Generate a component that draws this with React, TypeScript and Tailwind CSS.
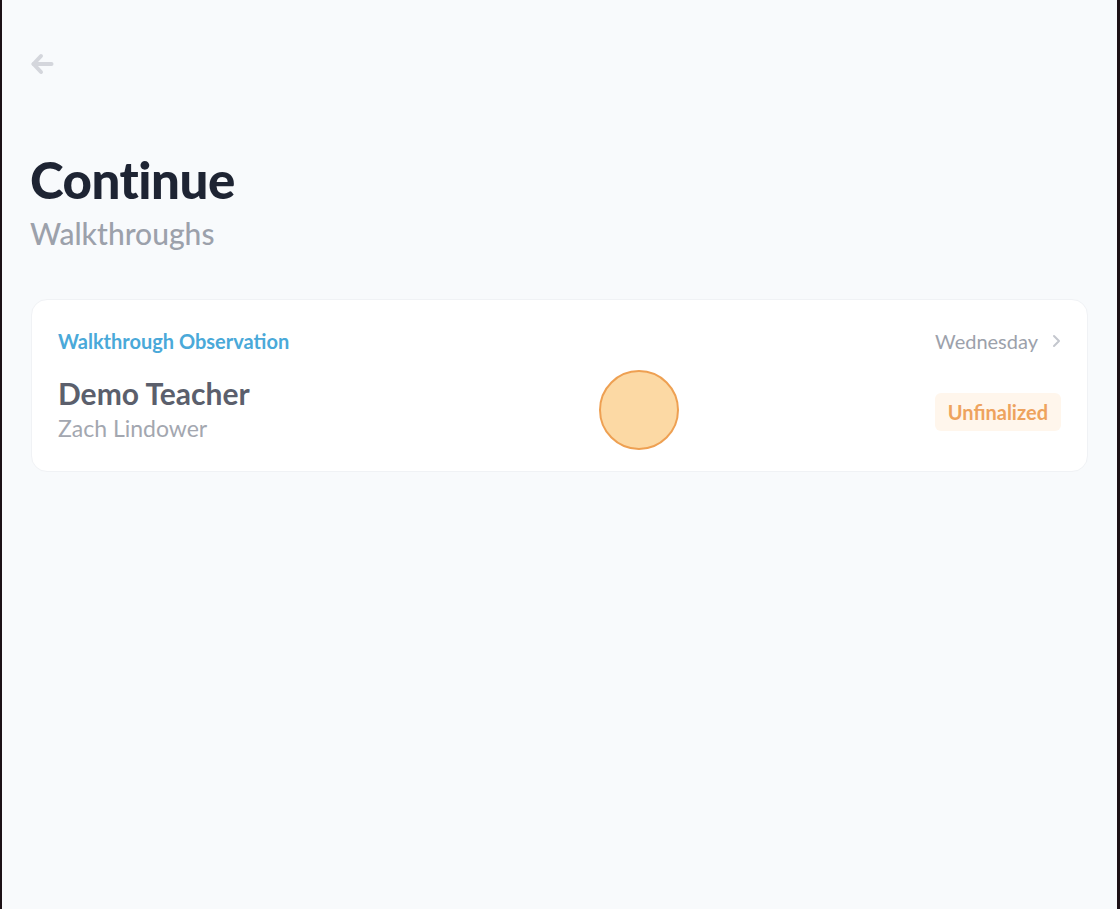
export default function App() {
  return (
    <div className="min-h-[909px] h-[909px] w-[1120px] bg-[#1c1116] flex" style={{ fontFamily: "Lato, 'Noto Sans', sans-serif" }}>
      <div className="relative ml-[2px] mr-[3px] flex-1 bg-[#f8fafc] px-[28px] pt-[52px]">
        {/* back arrow */}
        <button className="block text-[#d4d6dc]">
          <svg width="24" height="24" viewBox="0 0 24 24" fill="none" stroke="currentColor" strokeWidth="4" strokeLinecap="round" strokeLinejoin="round">
            <path d="M21.5 12H3.5" />
            <path d="M11 4L3.5 12l7.5 8" />
          </svg>
        </button>

        <header className="mt-[76px]">
          <h1 className="text-[51px] leading-[56px] font-black text-[#1e2433] tracking-[-0.5px]">Continue</h1>
          <p className="mt-[7px] text-[30px] leading-[36px] text-[#9ca1ab] font-medium">Walkthroughs</p>
        </header>

        <section className="mt-[48px] ml-[1px] mr-[1px] bg-white rounded-[16px] border border-[#f0f2f5] px-[26px] pt-[29px] pb-[28px]">
          <div className="flex items-center justify-between">
            <span className="text-[20px] leading-[24px] font-bold text-[#4aa9d9]">Walkthrough Observation</span>
            <span className="flex items-center gap-[13px] text-[20px] leading-[24px] text-[#9ca1ab]">
              Wednesday
              <svg width="10" height="14" viewBox="0 0 10 14" fill="none" stroke="#c4c7ce" strokeWidth="2" strokeLinecap="round" strokeLinejoin="round">
                <path d="M3 2l5 5-5 5" />
              </svg>
            </span>
          </div>
          <div className="mt-[22px] flex items-end justify-between">
            <div>
              <div className="text-[30px] leading-[36px] font-bold text-[#5b5f6c]">Demo Teacher</div>
              <div className="mt-[2px] text-[23px] leading-[30px] text-[#a3a7b0]">Zach Lindower</div>
            </div>
            <span className="mb-[12px] rounded-[6px] bg-[#fff6ec] px-[13px] py-[8px] text-[20px] leading-[22px] font-bold text-[#eea35e]">Unfinalized</span>
          </div>
        </section>

        {/* touch indicator */}
        <div className="absolute left-[597px] top-[370px] h-[80px] w-[80px] rounded-full border-2 border-[#eea052] bg-[#fcd9a4]" />
      </div>
    </div>
  );
}
